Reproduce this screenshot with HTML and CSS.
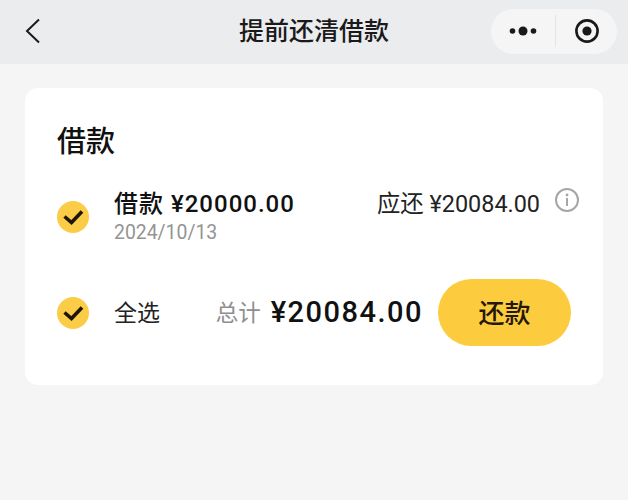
FILE: index.html
```html
<!DOCTYPE html>
<html lang="zh-CN">
<head>
<meta charset="utf-8">
<title>提前还清借款</title>
<link rel="stylesheet" href="styles.css">
</head>
<body>
<header class="nav">
  <svg class="back" width="16" height="26" viewBox="0 0 16 26"><path d="M14 1.5 2 13l12 11.5" fill="none" stroke="#1a1a1a" stroke-width="2"/></svg>
  <h1 class="nav-title">提前还清借款</h1>
  <div class="capsule">
    <svg class="more" width="28" height="12" viewBox="0 0 28 12"><circle cx="3.5" cy="6" r="2.8" fill="#1a1a1a"/><circle cx="14" cy="6" r="4.5" fill="#1a1a1a"/><circle cx="24.5" cy="6" r="2.8" fill="#1a1a1a"/></svg>
    <span class="capsule-line"></span>
    <svg class="target" width="26" height="26" viewBox="0 0 26 26"><circle cx="13" cy="13" r="10.6" fill="none" stroke="#1a1a1a" stroke-width="2.6"/><circle cx="13" cy="13" r="4.6" fill="#1a1a1a"/></svg>
  </div>
</header>
<main class="card">
  <h2 class="card-title">借款</h2>
  <section class="loan">
    <svg class="check" width="32" height="32" viewBox="0 0 32 32"><circle cx="16" cy="16" r="16" fill="#fbcd47"/><path d="M7.5 15.5 14.5 21.5 25 10.5" fill="none" stroke="#1f1408" stroke-width="3.6"/></svg>
    <div class="loan-main">
      <div class="loan-name">借款 ¥20000.00</div>
      <div class="loan-date">2024/10/13</div>
    </div>
    <div class="loan-due">应还 ¥20084.00</div>
    <svg class="info" width="24" height="24" viewBox="0 0 24 24"><circle cx="12" cy="12" r="11" fill="none" stroke="#a6a6a6" stroke-width="2"/><circle cx="12" cy="7" r="1.4" fill="#a6a6a6"/><rect x="11" y="10" width="2" height="8" fill="#a6a6a6"/></svg>
  </section>
  <section class="total">
    <svg class="check" width="32" height="32" viewBox="0 0 32 32"><circle cx="16" cy="16" r="16" fill="#fbcd47"/><path d="M7.5 15.5 14.5 21.5 25 10.5" fill="none" stroke="#1f1408" stroke-width="3.6"/></svg>
    <span class="select-all">全选</span>
    <span class="total-label">总计</span>
    <span class="total-amount">¥20084.00</span>
    <button class="pay">还款</button>
  </section>
</main>
</body>
</html>
```
FILE: styles.css
```css
* { box-sizing: border-box; }
html, body { margin: 0; height: 100%; }
body {
  background: #f5f5f5;
  color: #111;
  font-family: "Roboto", "Noto Sans CJK SC", sans-serif;
  overflow: hidden;
}
.nav {
  height: 64px;
  background: #ebecee;
  display: flex;
  align-items: center;
  position: relative;
  padding: 0 11px 2px 25px;
  justify-content: space-between;
}
.nav-title {
  position: absolute;
  left: 0;
  right: 0;
  top: 13px;
  margin: 0;
  text-align: center;
  font-size: 25px;
  line-height: 38px;
  font-weight: 500;
  color: #1a1a1a;
}
.capsule {
  width: 126px;
  height: 45px;
  border-radius: 23px;
  background: #f5f5f6;
  display: flex;
  align-items: center;
  padding: 0 17px 0 18px;
  justify-content: space-between;
}
.capsule-line { width: 1px; height: 32px; background: #e4e4e6; }
.card {
  margin: 24px 25px 0;
  height: 297px;
  background: #fff;
  border-radius: 13px;
  padding: 33px 24px 0 32px;
}
.card-title {
  margin: 0;
  font-size: 29px;
  line-height: 42px;
  font-weight: 500;
  color: #111;
}
.loan {
  display: flex;
  align-items: flex-start;
  margin-top: 25px;
}
.loan .check { margin-top: 13px; flex: none; }
.loan-main { margin-left: 25px; flex: 1; }
.loan-name {
  font-size: 24px;
  line-height: 33px;
  font-weight: 500;
  letter-spacing: 1px;
  white-space: nowrap;
}
.loan-date {
  font-size: 19.4px;
  line-height: 24px;
  color: #949494;
}
.loan-due {
  font-size: 23.4px;
  line-height: 33px;
  color: #222;
  white-space: nowrap;
}
.info { margin: 0 0 0 15px; flex: none; }
.total {
  display: flex;
  align-items: center;
  margin-top: 34px;
  padding-right: 8px;
}
.total .check { flex: none; }
.select-all { margin: 0 0 4px 25px; font-size: 23px; color: #222; }
.total-label { margin: 0 0 4px auto; font-size: 22.5px; color: #8e8e8e; }
.total-amount {
  margin: 0 0 2px 10px;
  font-size: 29px;
  font-weight: 500;
  letter-spacing: 1.5px;
  white-space: nowrap;
}
.pay {
  margin-left: 15px;
  width: 133px;
  height: 67px;
  border: 0;
  border-radius: 34px;
  padding: 0 0 2px;
  background: #fdcb3e;
  color: #24180a;
  font: 500 26px "Noto Sans CJK SC", sans-serif;
}
```
